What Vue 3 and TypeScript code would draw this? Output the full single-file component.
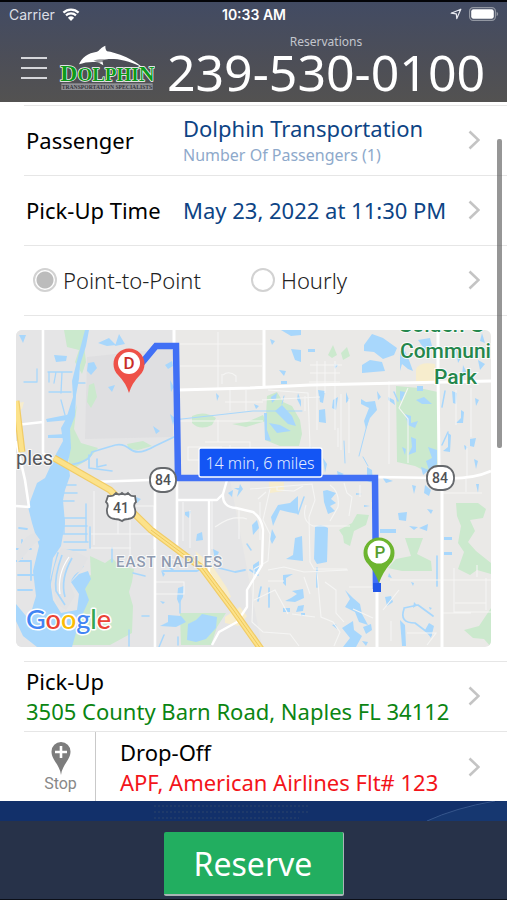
<script setup lang="ts">
import { ref } from 'vue'

type TripType = 'point' | 'hourly'

interface DetailRow {
  label: string
  value: string
  note?: string
}

const tripType = ref<TripType>('point')

const details: DetailRow[] = [
  { label: 'Passenger', value: 'Dolphin Transportation', note: 'Number Of Passengers (1)' },
  { label: 'Pick-Up Time', value: 'May 23, 2022 at 11:30 PM' },
]
</script>

<template>
  <div class="screen">
    <header class="header">
      <div class="status">
        <div class="status-left">
          <span>Carrier</span>
          <svg class="wifi" viewBox="0 0 18 13" aria-hidden="true">
            <path d="M1.4 4.6a11 11 0 0 1 15.2 0M4 7.4a7.2 7.2 0 0 1 10 0" fill="none" stroke="#fff" stroke-width="2.2" />
            <path d="M9 13 5.9 9.7a4.5 4.5 0 0 1 6.2 0z" fill="#fff" />
          </svg>
        </div>
        <div class="time">10:33 AM</div>
        <div class="status-right">
          <svg class="locate" viewBox="0 0 12 12" aria-hidden="true">
            <path d="M10.8 1.2 6.8 10.6 6.3 5.8 1.2 5.2z" fill="none" stroke="#e8eaf0" stroke-width="1.2" stroke-linejoin="round" />
          </svg>
          <svg class="battery" viewBox="0 0 30 14" aria-hidden="true">
            <rect x="0.6" y="0.6" width="25.8" height="12.8" rx="3.6" fill="none" stroke="#9297a2" stroke-width="1.2" />
            <rect x="2.2" y="2.2" width="22.6" height="9.6" rx="2.2" fill="#fff" />
            <path d="M27.6 4.8c2 .8 2 3.6 0 4.4z" fill="#9297a2" />
          </svg>
        </div>
      </div>
      <div class="brand">
        <button class="menu" type="button" aria-label="Menu">
          <span></span><span></span><span></span>
        </button>
        <svg class="logo" viewBox="57 12 288 144" role="img" aria-label="Dolphin Transportation Specialists">
          <path
            d="M117 73C125 53 144 39 171 35C178 32 183 22 196 17C196 25 197 30 201 34C228 38 255 49 276 61C289 68 299 75 306 82C282 69 251 59 222 57C206 56 195 58 187 62L190 76L174 67C158 64 134 66 117 73Z"
            fill="#fff"
          />
          <path d="M160 62C178 56 194 57 212 62C196 62 188 64 178 68Z" fill="#53545c" opacity=".6" />
          <text class="logo-name" x="61" y="123" font-size="71">D<tspan font-size="57">OLPHI</tspan><tspan font-size="66">N</tspan></text>
          <rect x="64" y="130" width="274" height="20" fill="#c9cbd0" opacity=".55" />
          <text class="logo-tag" x="65" y="146" font-size="17">TRANSPORTATION SPECIALISTS</text>
        </svg>
        <a class="phone" href="tel:2395300100">
          <span class="phone-label">Reservations</span>
          <span class="phone-number">239-530-0100</span>
        </a>
      </div>
    </header>

    <main class="content">
      <button v-for="row in details" :key="row.label" class="row" type="button">
        <span class="label">{{ row.label }}</span>
        <span class="value">
          <span>{{ row.value }}</span>
          <small v-if="row.note">{{ row.note }}</small>
        </span>
        <svg class="chevron" viewBox="0 0 12 20" aria-hidden="true"><path d="M1.5 1.5 10.5 10 1.5 18.5" /></svg>
      </button>

      <div class="row">
        <div class="options" role="radiogroup" aria-label="Trip type">
          <label><input v-model="tripType" type="radio" name="trip" value="point" />Point-to-Point</label>
          <label><input v-model="tripType" type="radio" name="trip" value="hourly" />Hourly</label>
        </div>
        <svg class="chevron" viewBox="0 0 12 20" aria-hidden="true"><path d="M1.5 1.5 10.5 10 1.5 18.5" /></svg>
      </div>

      <div class="map-wrap">
        <svg class="map" viewBox="16 330 475 317" role="img" aria-label="Route map, 14 min, 6 miles">
          <rect x="16" y="330" width="475" height="317" fill="#eae9e7" />
          <path d="M16 330H175V480H230L262 647H16Z" fill="#e5e5e6" />
          <path d="M87 357 173 348V437L85 439Z" fill="#dfdfe1" />

          <!-- parks -->
          <g fill="#cbe9cd">
            <path d="M64 330H88L84 345 86 362 82 374 75 362 79 350 67 347Z" />
            <path d="M89 385 94 383 97 397 91 408 87 402Z" />
            <path d="M77 404 74 429 81 443 98 448 89 459 76 467 69 463 69 432Z" />
            <path d="M127 444 143 441 152 446 138 450 129 449Z" />
            <path d="M192 416Q204 410 216 418L212 425Q200 431 192 423Z" />
            <path d="M232 424 247 422 263 415 266 421 246 427Z" />
            <path d="M267 396 277 392 283 402 292 406 300 420 302 434 299 446H280L265 440 266 416Z" />
            <path d="M396 386 419 388 438 392 439 464 431 474 415 466 397 462Z" />
            <path d="M328 355 333 345 337 355 332 358ZM341 353 347 347 350 356 343 360Z" />
            <path d="M90 556 105 563 112 558 120 566 134 569 132 582 129 592 133 606 132 633 110 645H71L77 626 83 610 86 597 80 582 91 575Z" />
            <path d="M180 613H226L217 627 211 645H181Z" />
            <path d="M339 530 352 523 357 514 369 515 366 525 354 531 350 546 344 543 343 536Z" />
            <path d="M405 538H423L417 554 431 561 432 571H402L388 568 396 559 411 556Z" />
            <path d="M456 503 478 503 486 509 483 518 470 520 475 531 468 542 476 551 491 563V574L477 570 470 575 458 569 464 552 458 543 461 526 457 516Z" />
            <path d="M491 608V647L484 639 473 638 464 630 479 626Z" />
          </g>

          <!-- commercial patches -->
          <g fill="#f7edcd">
            <path d="M416 382V369Q420 361 435 364V382Z" />
            <path d="M195 551 211 564 227 588 231 597 224 600 205 578Z" />
            <path d="M225 617 240 607 247 616 239 626 225 623Z" />
            <path d="M269 482H284V491L270 493Z" />
            <path d="M16 403 24 402 22 409 16 411Z" />
          </g>

          <!-- rivers, bays and lakes -->
          <g fill="#a8d7fc">
            <path d="M85 330H89L86 346 80 365 79 379 76 395 75 416 70 429 71 448 68 462 70 476 65 490 63 500 65 523 61 546 53 558 50 579 53 600 61 613 77 610 79 594 71 582 79 574 88 571 91 579 85 589 89 600 79 622 72 647H50L35 635 30 616 36 596 33 571 39 546 32 523 28 507 37 483 45 478 51 465 56 454 63 441 61 428 66 419 73 397 72 381 79 353Z" />
            <path d="M16 604 26 616 30 628 44 634 57 647H37L23 636 16 621Z" />
            <path d="M98 343 109 338 116 345 107 346ZM115 346 119 334 125 344Z" />
            <path d="M88 363 94 362 97 368 91 375 87 371ZM108 387 115 385 112 392ZM153 426 160 431 156 434ZM165 365 172 361 173 366 168 369ZM170 380 174 387 171 392ZM170 414 175 418 173 425Z" />
            <path d="M19 335H26L23 343ZM54 355 67 356 66 361 56 362ZM46 419 71 414 69 420 47 422ZM48 435 66 434 66 438 48 438Z" />
            <path d="M364 345 372 334 383 338 397 348 394 355 383 359 374 352 364 351ZM362 365 370 360 382 362 385 371 362 373Z" />
            <path d="M291 349 301 350 301 362 295 360ZM308 349H315V352H308ZM281 330H301V335L291 336ZM270 339 275 341 272 345ZM279 370 286 371 284 376ZM281 381H287V384H281ZM334 364 338 365 335 369Z" />
            <path d="M400 351H405L409 360 413 371 408 369 402 364 400 371ZM418 340 430 338 432 346 425 350ZM456 349 461 358 458 363ZM463 365 468 375 462 377ZM478 360 485 364 480 370ZM482 333 485 343 480 341Z" />
            <path d="M264 413H267V430L271 441 265 440ZM271 397 277 393 276 399 272 403ZM275 411 282 405 292 416 296 426 288 424ZM269 423 280 425 291 431 277 433ZM298 393 301 401 301 407 297 399Z" />
            <path d="M318 390 325 391 323 403 320 402ZM319 410 325 409 326 423 319 422ZM333 400 338 397 336 410 332 408ZM346 392 349 400 346 403Z" />
            <path d="M361 399 366 402 375 401 377 410 370 418 366 429 364 421 369 408 361 404ZM377 391 381 397 378 400ZM388 397 394 400 395 405 388 400Z" />
            <path d="M400 391 405 392 402 401 400 400ZM417 386H423V391H417ZM416 400 424 397 432 404 422 404ZM405 414 411 416 411 423 418 421 415 428 408 425ZM411 437 416 439 416 452 408 455 412 447ZM402 447 406 449 405 455ZM428 447 437 450 437 464 429 470 426 461 432 458ZM421 467 429 470 423 475Z" />
            <path d="M452 391 457 393 456 404 453 403ZM461 410 464 412 463 423 456 423 461 418ZM475 398 479 400 476 406ZM448 433 451 435 450 452 443 451 448 447ZM470 439 476 438 474 447 470 446ZM474 459 478 461 476 469ZM464 445 468 447 465 450Z" />
            <path d="M323 458 327 464 325 473ZM337 471 344 474 338 477ZM367 467 372 470 373 483 367 481ZM382 477 393 481 386 483Z" />
            <path d="M315 527Q321 523 328 528L327 562 317 564 314 559Z" />
            <path d="M290 503 298 496V514L288 512 280 510 273 526 271 517 278 505ZM323 491 327 490 336 493 331 499 336 503 330 506 335 511 328 514 324 502ZM272 529 276 537 272 544 270 539ZM295 538 302 536 303 561 286 559 293 555Z" />
            <path d="M185 512 191 511 189 518 185 515ZM197 534 202 532 203 540 196 541ZM213 549 219 552 215 560ZM252 525 257 520 259 528 253 535ZM253 565 259 561 259 573 253 571ZM178 588 184 586 183 597 179 604 177 599ZM168 615 181 616 186 622 176 627 160 626 168 622ZM188 624 196 620 202 614 217 617 216 628 206 639 196 642 187 640Z" />
            <path d="M283 575 293 574 286 578V586L283 583ZM292 591 303 589 304 598 295 602 285 601 291 598 297 594ZM283 608H290V612H283ZM298 606 304 605 303 611 296 612ZM301 613H305V616H301Z" />
            <path d="M345 590 353 598 360 604 362 614 368 625 359 622 355 612 345 607 350 599ZM342 628 353 621 354 630 362 636 356 647H343L350 638ZM332 625 336 624 337 629ZM363 627 371 624 372 630 366 634ZM362 641 368 642 366 646Z" />
            <path d="M385 597 391 596 393 602 387 606ZM398 513 407 512 406 521 399 520ZM409 526 418 527 414 530ZM427 509 433 510 431 514ZM380 529H396V533H380ZM419 528 428 524 427 531ZM444 537H452V540H444ZM444 552H452V555H444ZM389 573 392 578 388 577ZM411 582 414 583 413 586Z" />
            <path d="M400 620 405 625 406 646H402ZM429 623 434 626 431 638 425 630ZM414 602 417 605 413 608ZM429 607 432 608 430 610ZM412 485 416 486 414 494ZM425 485 431 490 429 496 424 493ZM476 484 479 484 478 493ZM356 493 362 494 356 495ZM364 505 370 506 364 507Z" />
            <path d="M228 493 233 490 232 497ZM240 484 243 489 237 497ZM160 601 165 602 163 604ZM161 570 165 574 163 577ZM136 497 141 499 137 503ZM216 393 219 396 217 401ZM254 404 259 406 256 409ZM234 488 242 488 238 490Z" />
          </g>
          <g fill="none" stroke="#a8d7fc" stroke-width="2" stroke-linecap="round" stroke-linejoin="round">
            <path d="M37 369V382H24M48 372H72M49 372V382M56 372 54 383M62 372 61 393M49 392H71M61 400 65 415M76 383H85" stroke-width="1.3" />
            <path d="M69 465Q90 462 92 452L112 446Q122 442 130 449T155 446L174 437M89 455V468L112 471M97 459V467L106 465" stroke-width="1.7" />
            <path d="M60 485H76M60 493H77M60 501H74M62 518H86M64 526H87M63 534H87M64 542H88M64 550H86M64 518V534M90 527V548M86 504V541M112 548V562" stroke-width="1.5" />
            <path d="M16 549H31M16 561H31M18 575H34M18 590H32M22 540V558M31 562V580M58 553 50 584M65 556 57 578 59 600M73 558 63 583 65 602M83 566 71 580M19 528 27 529" stroke-width="1.8" />
            <path d="M163 571H197L201 569M219 568 235 572 245 570M168 566 174 571" stroke-width="1.8" />
            <path d="M180 590V613M129 630V646M164 635 159 647M178 637V645M142 616H149M133 573 145 576" stroke-width="1.5" />
            <path d="M173 420 253 411 302 411M284 396 282 404M359 456 368 421M344 441 345 463M363 457 368 466M311 447 315 452" stroke-width="1" />
            <path d="M404 609Q399 623 415 623L431 635M404 608 418 605 433 616M437 556V586M269 588V607M261 587 258 601M317 568V587M250 570 258 575" stroke-width="1.7" />
            <path d="M445 391 442 407M442 445 448 432M304 497 298 514M394 392 398 401M247 544 251 550" stroke-width="1.5" />
          </g>

          <!-- islands between the canals -->
          <path d="M17 552Q24 535 35 533L40 540Q32 545 28 551T17 563ZM61 548Q75 550 88 558L81 571Q73 573 70 584L75 596 66 610 57 604 51 586Q53 566 61 548Z" fill="#e2e3e5" />
          <path d="M62 555Q54 577 56 591L65 605M72 558Q60 579 65 597" fill="none" stroke="#a8d7fc" stroke-width="1.7" />
          <path d="M69 557Q57 574 60 594" fill="none" stroke="#fff" stroke-width="1.2" />

          <!-- side streets -->
          <g fill="none" stroke="#f5f5f4" stroke-width="1.1">
            <path d="M180 344H264M180 366H262M218 332V390M230 388V411M246 390V411M225 402H263M180 421H263M218 420V442M205 442H250V460H188V447H222M230 445V463" />
            <path d="M223 375Q229 370 236 376V382M222 374V384M262 400 320 397M317 361V430M325 361V393M335 361V430M310 365H342M310 373H340M309 382H340M338 428V447" />
            <path d="M268 390 308 393 310 447M305 396V411M341 394V450M349 399V453M389 381V464M408 388 399 408 408 419V463M456 390V425M471 388V437M467 446V477" />
            <path d="M130 490V566M118 492V534M132 506H154V549M94 491V545M91 534 154 534M91 548H131M183 502V541M190 510V548M212 499V549M239 510V539M247 519Q233 514 215 527M155 582H184V594H156M160 556 178 561" />
            <path d="M250 489 312 484 315 500 309 517 310 562 314 569H347M270 489 263 520 270 534 268 561 254 569 252 622 263 632 290 634 299 646M268 570 284 567 304 572 348 570" />
            <path d="M313 526Q301 521 306 505M330 485Q340 492 338 507L330 521M313 526H350M344 483 347 493 352 497 349 516M360 485V497" />
            <path d="M390 580 491 580M454 568V612H491M477 565V577M486 578V610M455 603H486M442 613 471 613M383 610 399 590M407 633H436L427 645M391 641V621M466 492V479M441 493H482" />
            <path d="M317 572 321 617 333 622 340 632 334 646M268 581H284M325 582 336 590V613L344 622M310 594 304 577M349 587H376M353 609 373 618M292 614 315 617" />
            <path d="M266 492 258 499M260 502V540M277 487V490L294 491 303 486M254 600 275 590 281 601 288 614" />
          </g>

          <!-- main roads -->
          <g fill="none" stroke="#fff" stroke-linejoin="round">
            <path d="M43 330V453L51 459M16 425 43 422M16 441 25 480 29 507 16 506M155 480V647M177 479V551M92 482 178 479 376 477M376 477 440 478Q471 480 491 471" stroke-width="2.6" />
            <path d="M174 330V350M178 390 250 388 310 385 491 381M264 330V386M438 330V370L439 466L442 488V647M377 589V647" stroke-width="3" />
            <path d="M178 500H217L223 494 227 480M209 500V573L222 591M223 494Q222 507 236 508L253 512Q262 518 263 530L262 565 247 590 247 607 237 622 219 632 212 645" stroke-width="2.4" />
          </g>
          <g fill="none" stroke-linejoin="round">
            <path d="M16 401 22 452M54 458 110 490 151 530 202 568 234 611 261 649" stroke="#f1cc67" stroke-width="7" />
            <path d="M16 401 22 452M54 458 110 490 151 530 202 568 234 611 261 649" stroke="#fce28a" stroke-width="4.6" />
            <path d="M151 530 202 568 234 611 261 649" stroke="#edc75c" stroke-width="1" />
          </g>

          <!-- place names -->
          <g class="place">
            <text x="16" y="465" font-size="20" fill="#55575b">ples</text>
            <g fill="#24874c" font-size="21">
              <text x="398" y="332">Golden G</text>
              <text x="400" y="358">Communi</text>
              <text x="434" y="384">Park</text>
            </g>
            <text class="district" x="116" y="567" font-size="15">EAST NAPLES</text>
          </g>

          <!-- route -->
          <path d="M136 370 156 346H176L178 478H375L376 589" fill="none" stroke="#4170f5" stroke-width="6.5" />
          <path d="M373 583H381V592H373Z" fill="#2257e8" />

          <!-- road shields -->
          <g fill="#fff" stroke="#66696d" stroke-width="1.8">
            <rect x="150" y="468" width="26" height="24" rx="11" />
            <rect x="427" y="466" width="27" height="24" rx="11" />
            <path d="M108 496Q113 497 116 493 119 496 122 493 125 496 128 493 131 497 135 496L136 502Q133 504 135 509 137 518 128 519 124 519 122 521 119 519 115 519 106 518 107 509 109 504 106 502Z" />
          </g>
          <g class="shield-text" font-size="14">
            <text x="163" y="485">84</text>
            <text x="440" y="483">84</text>
            <text x="121" y="513">41</text>
          </g>

          <!-- drop-off and pick-up pins -->
          <path d="M129 393Q126 383 118 375A15.5 15.5 0 1 1 140 375Q132 383 129 393Z" fill="#ee5148" />
          <circle cx="129" cy="363" r="11" fill="#fff" />
          <text class="pin-letter" x="129" y="369" font-size="17" fill="#c92d28">D</text>
          <path d="M379 583Q375 572 368 564A15.5 15.5 0 1 1 390 564Q383 572 379 583Z" fill="#6db52f" />
          <circle cx="379" cy="552" r="11.5" fill="#fff" />
          <text class="pin-letter" x="380" y="558" font-size="17" fill="#579d2d">P</text>

          <!-- trip summary -->
          <rect x="199" y="448" width="123" height="29" rx="2" fill="#1355f4" stroke="#fff" stroke-width="1.3" />
          <text class="summary" x="260" y="469" font-size="16">14 min, 6 miles</text>

          <text class="google" x="26" y="629" font-size="27"><tspan fill="#4285f4">G</tspan><tspan fill="#ea4335">o</tspan><tspan fill="#fbbc05">o</tspan><tspan fill="#4285f4">g</tspan><tspan fill="#34a853">l</tspan><tspan fill="#ea4335">e</tspan></text>
        </svg>
      </div>

      <button class="row" type="button">
        <span class="stack">
          <span>Pick-Up</span>
          <span class="pickup">3505 County Barn Road, Naples FL 34112</span>
        </span>
        <svg class="chevron" viewBox="0 0 12 20" aria-hidden="true"><path d="M1.5 1.5 10.5 10 1.5 18.5" /></svg>
      </button>

      <div class="row drop-row">
        <button class="stop" type="button">
          <svg viewBox="0 0 20 33" aria-hidden="true">
            <path d="M10 33C9 23 0.5 18 0.5 9.5a9.5 9.5 0 0 1 19 0C19.5 18 11 23 10 33Z" fill="#7d7d7d" />
            <path d="M10 4V16M4 10H16" stroke="#fff" stroke-width="2.6" />
          </svg>
          <span>Stop</span>
        </button>
        <button class="drop" type="button">
          <span class="stack">
            <span>Drop-Off</span>
            <span class="dropoff">APF, American Airlines Flt# 123</span>
          </span>
          <svg class="chevron" viewBox="0 0 12 20" aria-hidden="true"><path d="M1.5 1.5 10.5 10 1.5 18.5" /></svg>
        </button>
      </div>
      <div class="scroll-thumb" aria-hidden="true"></div>
    </main>

    <div class="backdrop" aria-hidden="true">
      <svg viewBox="0 0 507 20" preserveAspectRatio="none">
        <path d="M427 20Q455 7 495 1L507 0V20Z" fill="#163770" />
        <path d="M427 20Q455 7 495 0" fill="none" stroke="#36568c" stroke-width="1" />
        <path d="M154 5H308M154 11H308M154 17H299" stroke="#1f3a6a" stroke-width="2" stroke-dasharray="2 2" />
      </svg>
    </div>

    <footer class="footer">
      <button class="reserve" type="button">Reserve</button>
    </footer>
  </div>
</template>

<style>
body {
  margin: 0;
  background: #12306a;
}
</style>

<style scoped>
.screen {
  display: flex;
  flex-direction: column;
  min-height: 100vh;
  box-sizing: border-box;
  border-bottom: 1px solid #0b0f18;
  font-family: "Noto Sans", sans-serif;
  color: #000;
}

button {
  margin: 0;
  padding: 0;
  border: 0;
  background: none;
  font: inherit;
  color: inherit;
  text-align: left;
  cursor: pointer;
}

.header {
  display: flex;
  flex-direction: column;
  height: 102px;
  box-sizing: border-box;
  border-top: 2px solid #030408;
  background: linear-gradient(#424b63, #4c4e58 55%, #535251);
  color: #fff;
}

.status {
  display: grid;
  grid-template-columns: 1fr auto 1fr;
  align-items: center;
  height: 24px;
  padding: 0 8px 0 9px;
  font-family: Inter, sans-serif;
  font-size: 14px;
}

.status-left,
.status-right {
  display: flex;
  align-items: center;
  gap: 7px;
  color: #dcdfe6;
}

.status-right {
  justify-content: flex-end;
}

.wifi {
  width: 18px;
  height: 13px;
}

.locate {
  width: 12px;
  height: 12px;
}

.battery {
  width: 30px;
  height: 14px;
}

.time {
  font-weight: 600;
}

.brand {
  display: flex;
  flex: 1;
  align-items: flex-start;
  padding: 0 20px 0 21px;
}

.menu {
  display: flex;
  flex-direction: column;
  gap: 8px;
  margin-top: 31px;
}

.menu span {
  width: 26px;
  height: 2px;
  background: #d5d6da;
}

.logo {
  width: 96px;
  height: 48px;
  margin: 18px 10px 0 12px;
}

.logo-name {
  font-family: "Liberation Serif", serif;
  font-weight: 700;
  fill: #0d9a1c;
  stroke: #fff;
  stroke-width: 4px;
  paint-order: stroke;
}

.logo-tag {
  font-family: "Liberation Serif", serif;
  font-weight: 700;
  fill: #34353b;
}

.phone {
  display: flex;
  flex: 1;
  flex-direction: column;
  align-items: center;
  padding-top: 8px;
  color: #fff;
  text-decoration: none;
  white-space: nowrap;
}

.phone-label {
  font-size: 12px;
  line-height: 16px;
  color: #c3c6cd;
}

.phone-number {
  font-size: 50px;
  line-height: 44px;
}

.content {
  position: relative;
  padding-top: 3px;
  background: #fff;
}

.row {
  display: flex;
  align-items: center;
  width: calc(100% - 24px);
  height: 70px;
  box-sizing: border-box;
  margin-left: 24px;
  padding: 0 27px 1px 2px;
  border-top: 1px solid #e6e6e6;
  font-size: 22px;
  line-height: 30px;
}

.label {
  width: 157px;
}

.value {
  display: flex;
  flex: 1;
  flex-direction: column;
  color: #0d4485;
  white-space: nowrap;
}

.value small {
  font-size: 16px;
  line-height: 24px;
  color: #8ea9cb;
}

.chevron {
  flex: none;
  width: 12px;
  height: 20px;
  margin-left: auto;
  fill: none;
  stroke: #c4c4c4;
  stroke-width: 2.6px;
}

.options {
  display: flex;
  gap: 50px;
  padding-left: 7px;
  font-weight: 300;
  color: #222;
}

.options label {
  display: flex;
  align-items: center;
  gap: 6px;
}

.options input {
  width: 24px;
  height: 24px;
  margin: 0;
  border: 2px solid #d2d2d2;
  border-radius: 50%;
  appearance: none;
  background: #fff;
}

.options input:checked {
  background: radial-gradient(circle, #bcbcbc 8px, #fff 9px);
}

.map-wrap {
  padding: 0 16px 14px;
}

.map-wrap::before {
  content: "";
  display: block;
  height: 1px;
  margin: 0 -16px 14px 8px;
  background: #e6e6e6;
}

.map {
  display: block;
  width: 100%;
  height: auto;
  border-radius: 6px;
}

.place {
  font-family: Roboto, sans-serif;
  font-weight: 500;
  stroke: #fff;
  stroke-width: 2px;
  stroke-opacity: 0.8;
  paint-order: stroke;
}

.place > text {
  font-weight: 400;
}

.place > .district {
  fill: #8f9bb0;
  font-weight: 500;
  letter-spacing: 1px;
}

.shield-text,
.pin-letter {
  font-family: Roboto, sans-serif;
  font-weight: 500;
  text-anchor: middle;
}

.shield-text {
  fill: #505256;
}

.summary {
  font-family: "Noto Sans", sans-serif;
  font-weight: 300;
  fill: #e4ecff;
  text-anchor: middle;
}

.google {
  font-family: Lato, sans-serif;
  font-weight: 500;
  stroke: #fff;
  stroke-width: 3px;
  stroke-linejoin: round;
  paint-order: stroke;
}

.stack {
  display: flex;
  flex-direction: column;
  white-space: nowrap;
}

.pickup {
  color: #0b8512;
}

.dropoff {
  color: #f3141a;
}

.drop-row {
  align-items: stretch;
  padding: 0;
}

.stop {
  display: flex;
  flex-direction: column;
  align-items: center;
  width: 72px;
  box-sizing: border-box;
  padding: 10px 0 0 2px;
  border-right: 1px solid #c9c9c9;
  font-family: Roboto, sans-serif;
  font-size: 16px;
  line-height: 18px;
  color: #888;
}

.stop svg {
  width: 20px;
  height: 33px;
}

.drop {
  display: flex;
  flex: 1;
  align-items: center;
  padding: 0 27px 0 24px;
}

.scroll-thumb {
  position: absolute;
  top: 37px;
  right: 5px;
  width: 5px;
  height: 309px;
  border-radius: 2px;
  background: rgb(80 80 80 / 60%);
}

.backdrop {
  flex: 1;
  min-height: 20px;
  background: #12306a;
}

.backdrop svg {
  display: block;
  width: 100%;
  height: 20px;
}

.footer {
  display: flex;
  justify-content: center;
  padding: 11px 0 3px;
  background: #273249;
}

.reserve {
  width: 180px;
  height: 64px;
  box-sizing: border-box;
  border-right: 1px solid #a9b5b6;
  border-bottom: 2px solid #a9b5b6;
  border-radius: 2px;
  background: #22ae60;
  font-size: 32px;
  color: #fff;
  text-align: center;
}
</style>
